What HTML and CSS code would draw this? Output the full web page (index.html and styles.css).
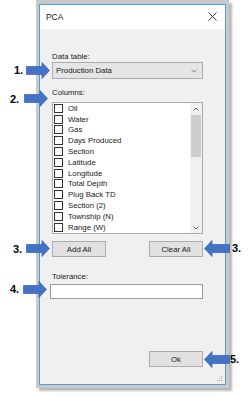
FILE: index.html
```html
<!DOCTYPE html>
<html>
<head>
<meta charset="utf-8">
<link rel="stylesheet" href="styles.css">
</head>
<body>
<div class="stage">
  <div class="frame">
    <div class="dialog">
      <div class="titlebar">
        <span class="title">PCA</span>
        <svg class="close" width="9" height="9" viewBox="0 0 9 9"><path d="M0.5 0.5 L8.5 8.5 M8.5 0.5 L0.5 8.5" stroke="#222" stroke-width="0.9" fill="none"/></svg>
      </div>
      <div class="body">
        <div class="label">Data table:</div>
        <div class="select">
          <span>Production Data</span>
          <svg class="chev" width="6" height="4" viewBox="0 0 6 4"><path d="M0.5 0.8 L3 3.2 L5.5 0.8" stroke="#666" stroke-width="0.8" fill="none"/></svg>
        </div>
        <div class="label cols">Columns:</div>
        <div class="list">
          <div class="items">
            <div class="row"><span class="box"></span>Oil</div>
            <div class="row"><span class="box"></span>Water</div>
            <div class="row"><span class="box"></span>Gas</div>
            <div class="row"><span class="box"></span>Days Produced</div>
            <div class="row"><span class="box"></span>Section</div>
            <div class="row"><span class="box"></span>Latitude</div>
            <div class="row"><span class="box"></span>Longitude</div>
            <div class="row"><span class="box"></span>Total Depth</div>
            <div class="row"><span class="box"></span>Plug Back TD</div>
            <div class="row"><span class="box"></span>Section (2)</div>
            <div class="row"><span class="box"></span>Township (N)</div>
            <div class="row"><span class="box"></span>Range (W)</div>
          </div>
          <div class="scrollbar">
            <div class="sbtn"><svg width="6" height="4" viewBox="0 0 6 4"><path d="M0.5 3.5 L3 1 L5.5 3.5" stroke="#555" stroke-width="0.9" fill="none"/></svg></div>
            <div class="track"><div class="thumb"></div></div>
            <div class="sbtn"><svg width="6" height="4" viewBox="0 0 6 4"><path d="M0.5 0.5 L3 3 L5.5 0.5" stroke="#555" stroke-width="0.9" fill="none"/></svg></div>
          </div>
        </div>
        <div class="btnrow">
          <div class="btn">Add All</div>
          <div class="btn">Clear All</div>
        </div>
        <div class="label tol">Tolerance:</div>
        <div class="input"></div>
        <div class="okrow"><div class="btn">Ok</div></div>
      </div>
      <svg class="grip" width="6" height="6" viewBox="0 0 6 6"><g fill="#b8b8b8"><rect x="4" y="0" width="1.2" height="1.2"/><rect x="2" y="2" width="1.2" height="1.2"/><rect x="4" y="2" width="1.2" height="1.2"/><rect x="0" y="4" width="1.2" height="1.2"/><rect x="2" y="4" width="1.2" height="1.2"/><rect x="4" y="4" width="1.2" height="1.2"/></g></svg>
    </div>
  </div>

  <span class="num n1">1.</span>
  <svg class="arrow a1" width="24" height="17" viewBox="0 0 24 17"><path d="M0.5 4.5 H16 V0.5 L23.5 8.5 L16 16.5 V12.5 H0.5 Z"/></svg>
  <span class="num n2">2.</span>
  <svg class="arrow a2" width="24" height="17" viewBox="0 0 24 17"><path d="M0.5 4.5 H16 V0.5 L23.5 8.5 L16 16.5 V12.5 H0.5 Z"/></svg>
  <span class="num n3">3.</span>
  <svg class="arrow a3" width="24" height="17" viewBox="0 0 24 17"><path d="M0.5 4.5 H16 V0.5 L23.5 8.5 L16 16.5 V12.5 H0.5 Z"/></svg>
  <span class="num n4">4.</span>
  <svg class="arrow a4" width="24" height="17" viewBox="0 0 24 17"><path d="M0.5 4.5 H16 V0.5 L23.5 8.5 L16 16.5 V12.5 H0.5 Z"/></svg>
  <svg class="arrow a3r" width="26" height="17" viewBox="0 0 26 17"><path d="M25.5 4.5 H8 V0.5 L0.5 8.5 L8 16.5 V12.5 H25.5 Z"/></svg>
  <span class="num n3r">3.</span>
  <svg class="arrow a5" width="26" height="17" viewBox="0 0 26 17"><path d="M25.5 4.5 H8 V0.5 L0.5 8.5 L8 16.5 V12.5 H25.5 Z"/></svg>
  <span class="num n5">5.</span>
</div>
</body>
</html>
```

FILE: styles.css
```css
* { box-sizing: border-box; }
html, body { margin: 0; padding: 0; background: #fff; }
body {
  font-family: "Liberation Sans", Arial, sans-serif;
  font-size: 7.8px;
  color: #1a1a1a;
}
.stage {
  position: relative;
  width: 250px;
  height: 397px;
  overflow: hidden;
}
.frame {
  margin-left: 36px;
  width: 193px;
  padding: 4px 3px 3px 3px;
  background: #c9c9c9;
  box-shadow: 3px 3px 2px rgba(0, 0, 0, 0.28);
}
.dialog {
  position: relative;
  height: 381px;
  border: 1px solid #4a9fe3;
  display: flex;
  flex-direction: column;
  background: #f0f0f0;
}
.titlebar {
  height: 24px;
  background: #fff;
  display: flex;
  align-items: center;
  justify-content: space-between;
  padding: 0 8px 1px 6px;
}
.title {
  font-size: 8.4px;
  color: #111;
}
.close { display: block; }
.body {
  flex: 1;
  padding: 23px 22px 0 12px;
  display: flex;
  flex-direction: column;
}
.label {
  height: 10px;
  line-height: 10px;
}
.cols { margin-top: 9px; }
.select {
  height: 17px;
  background: #e5e5e5;
  border: 1px solid #acacac;
  display: flex;
  align-items: center;
  justify-content: space-between;
  padding: 0 5px 0 3px;
}
.chev { display: block; }
.list {
  margin-top: 4px;
  height: 132px;
  border: 1px solid #a8aab0;
  background: #fff;
  display: flex;
  overflow: hidden;
}
.items {
  flex: 1;
  overflow: hidden;
}
.row {
  height: 10.8px;
  display: flex;
  align-items: center;
  padding-left: 1px;
  white-space: nowrap;
}
.box {
  width: 9px;
  height: 9px;
  border: 1px solid #333;
  background: #fff;
  margin-right: 5px;
  flex: none;
}
.scrollbar {
  width: 12px;
  background: #f0f0f0;
  display: flex;
  flex-direction: column;
}
.sbtn {
  height: 11px;
  display: flex;
  align-items: center;
  justify-content: center;
}
.sbtn svg { display: block; }
.track {
  flex: 1;
  padding: 1px 1px 0 1px;
}
.thumb {
  height: 42px;
  background: #cdcdcd;
}
.btnrow {
  margin-top: 7px;
  display: flex;
  justify-content: space-between;
}
.btn {
  width: 54px;
  height: 16px;
  background: #e1e1e1;
  border: 1px solid #adadad;
  display: flex;
  align-items: center;
  justify-content: center;
}
.tol { margin-top: 15px; }
.input {
  margin-top: 2px;
  margin-left: -2px;
  height: 15px;
  background: #fff;
  border: 1px solid #9a9a9a;
}
.okrow {
  margin-top: 52px;
  display: flex;
  justify-content: flex-end;
}
.grip {
  position: absolute;
  right: 2px;
  bottom: 2px;
}
.num {
  position: absolute;
  font-family: "Liberation Sans", Arial, sans-serif;
  font-weight: bold;
  font-size: 11px;
  line-height: 12px;
  color: #000;
}
.arrow {
  position: absolute;
  display: block;
}
.arrow path {
  fill: #4472c4;
  stroke: #3560ad;
  stroke-width: 0.7;
}
.n1 { left: 14px; top: 64px; }
.a1 { left: 26px; top: 62px; }
.n2 { left: 10px; top: 93px; }
.a2 { left: 24px; top: 90px; }
.n3 { left: 13px; top: 243px; }
.a3 { left: 26px; top: 240px; }
.n4 { left: 10px; top: 283px; }
.a4 { left: 23px; top: 281px; }
.a3r { left: 204px; top: 240px; }
.n3r { left: 232px; top: 242px; }
.a5 { left: 204px; top: 351px; }
.n5 { left: 230px; top: 353px; }
```
